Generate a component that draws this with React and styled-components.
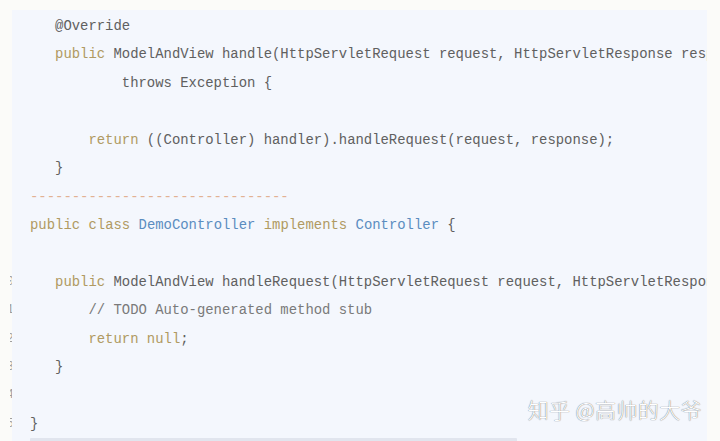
import React from 'react'
import styled, { createGlobalStyle } from 'styled-components'

const GlobalStyle = createGlobalStyle`
    html, body {
        margin: 0;
        padding: 0;
        background: #fbfbf9;
        overflow: hidden;
    }
`

const Page = styled.div`
    width: 720px;
    height: 441px;
    display: flex;
    padding-top: 10px;
    box-sizing: border-box;
    overflow: hidden;
`

const Gutter = styled.div`
    width: 14px;
    padding-top: 2px;
    display: flex;
    flex-direction: column;
    flex-shrink: 0;
`

// only the tail of each line number peeks out past the block edge
const LineNo = styled.div`
    height: 28.43px;
    line-height: 28.43px;
    width: 4px;
    margin-left: 10px;
    overflow: hidden;
    display: flex;
    justify-content: flex-end;
    font-family: "Liberation Mono", monospace;
    font-size: 13px;
    color: #a0a0a0;
    white-space: pre;
`

const Block = styled.div`
    position: relative;
    width: 695px;
    margin-left: -2px;
    background: #f4f7fd;
    overflow: hidden;
    padding-top: 2px;
    box-sizing: border-box;
`

const Code = styled.pre`
    margin: 0;
    padding-left: 18px;
    font-family: "Liberation Mono", monospace;
    font-size: 13.92px;
    line-height: 28.43px;
    color: #606060;
    white-space: pre;
`

const Line = styled.div`
    height: 28.43px;
`

const Tok = styled.span`
    color: ${p => ({
        kw: '#b09a62',
        type: '#5b8dc0',
        dash: '#e2b193',
        comment: '#7a7a7a',
    }[p.$k] || '#606060')};
`

const ScrollThumb = styled.div`
    width: 487px;
    height: 4px;
    margin-left: 18px;
    background: #e1e5ee;
    border-radius: 1px;
`

const Watermark = styled.div`
    position: absolute;
    right: 5px;
    top: 384px;
    font-family: "Noto Sans CJK SC", "Noto Sans", sans-serif;
    font-size: 21px;
    font-weight: 300;
    letter-spacing: 0.4px;
    color: #ffffff;
    text-shadow: 0 0 1px rgba(0, 0, 0, 0.5), 0 0 1px rgba(0, 0, 0, 0.3);
`

const lines = [
    [['   '], ['@Override']],
    [['   '], ['public', 'kw'], [' ModelAndView handle(HttpServletRequest request, HttpServletResponse response, Object handler)']],
    [['           throws Exception {']],
    [['']],
    [['       '], ['return', 'kw'], [' ((Controller) handler).handleRequest(request, response);']],
    [['   }']],
    [['-------------------------------', 'dash']],
    [['public', 'kw'], [' '], ['class', 'kw'], [' '], ['DemoController', 'type'], [' '], ['implements', 'kw'], [' '], ['Controller', 'type'], [' {']],
    [['']],
    [['   '], ['public', 'kw'], [' ModelAndView handleRequest(HttpServletRequest request, HttpServletResponse response)']],
    [['       '], ['// TODO Auto-generated method stub', 'comment']],
    [['       '], ['return', 'kw'], [' '], ['null', 'kw'], [';']],
    [['   }']],
    [['']],
    [['}']],
]

const numbers = ['', '', '', '', '', '', '', '', '', '10', '11', '12', '13', '14', '15']

const App = () => {
    return (
        <Page>
            <GlobalStyle />
            <Gutter>
                {numbers.map((n, i) => <LineNo key={i}>{n}</LineNo>)}
            </Gutter>
            <Block>
                <Code>
                    {lines.map((line, i) => (
                        <Line key={i}>
                            {line.map(([text, kind], j) => <Tok key={j} $k={kind}>{text}</Tok>)}
                        </Line>
                    ))}
                </Code>
                <ScrollThumb />
                <Watermark>知乎 @高帅的大爷</Watermark>
            </Block>
        </Page>
    )
}

export default App
